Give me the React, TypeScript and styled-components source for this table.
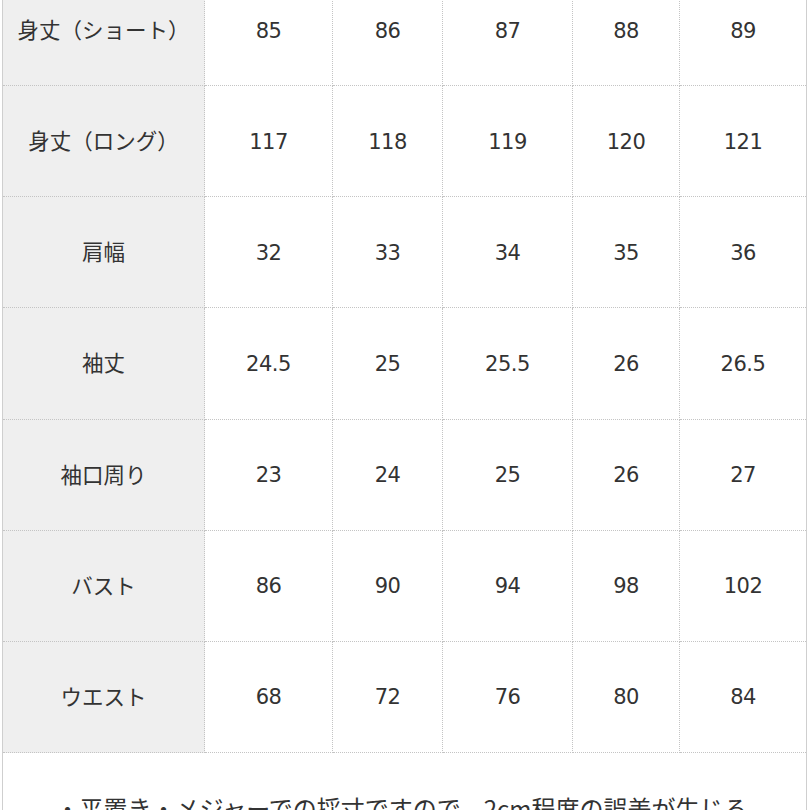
import React from 'react'
import styled, { createGlobalStyle } from 'styled-components'

const GlobalStyle = createGlobalStyle`
  html, body {
    margin: 0;
    padding: 0;
    background: #ffffff;
    overflow: hidden;
  }
  body {
    width: 810px;
    height: 810px;
    font-family: "Noto Sans CJK JP", "Noto Sans", sans-serif;
    color: #333333;
  }
`

const Frame = styled.div`
  margin: -25px 3px 0 2px;
  border-left: 1px solid #cfcfcf;
  border-right: 1px solid #cfcfcf;
  height: 860px;
`

const Table = styled.div`
  display: grid;
  grid-template-columns: 202px 128px 110px 130px 107px 1fr;
`

const Cell = styled.div<{ $head?: boolean; $last?: boolean }>`
  box-sizing: border-box;
  height: 111.15px;
  display: flex;
  align-items: center;
  justify-content: center;
  padding: ${(p) => (p.$head ? '0 0 3px' : '1px 0 0')};
  background: ${(p) => (p.$head ? '#efefef' : '#ffffff')};
  border-bottom: 1px dotted #c4c4c4;
  border-right: ${(p) => (p.$last ? 'none' : '1px dotted #c4c4c4')};
  font-family: ${(p) =>
    p.$head ? '"Noto Sans CJK JP", sans-serif' : '"DejaVu Sans", "Noto Sans CJK JP", sans-serif'};
  font-size: ${(p) => (p.$head ? '21.5px' : '21px')};
  color: #333333;
  letter-spacing: ${(p) => (p.$head ? '0' : '-0.5px')};
`

const Note = styled.p`
  margin: 0;
  padding-top: 38px;
  padding-right: 6px;
  text-align: center;
  font-family: "Noto Sans CJK JP", sans-serif;
  font-size: 24px;
  line-height: 1.4;
  color: #333333;
`

const rows: [string, string[]][] = [
  ['身丈（ショート）', ['85', '86', '87', '88', '89']],
  ['身丈（ロング）', ['117', '118', '119', '120', '121']],
  ['肩幅', ['32', '33', '34', '35', '36']],
  ['袖丈', ['24.5', '25', '25.5', '26', '26.5']],
  ['袖口周り', ['23', '24', '25', '26', '27']],
  ['バスト', ['86', '90', '94', '98', '102']],
  ['ウエスト', ['68', '72', '76', '80', '84']],
]

export default function App() {
  return (
    <>
      <GlobalStyle />
      <Frame>
        <Table>
          {rows.map(([label, values]) => (
            <React.Fragment key={label}>
              <Cell $head>{label}</Cell>
              {values.map((v, i) => (
                <Cell key={i} $last={i === values.length - 1}>
                  {v}
                </Cell>
              ))}
            </React.Fragment>
          ))}
        </Table>
        <Note>・平置き・メジャーでの採寸ですので、2cm程度の誤差が生じる</Note>
      </Frame>
    </>
  )
}
